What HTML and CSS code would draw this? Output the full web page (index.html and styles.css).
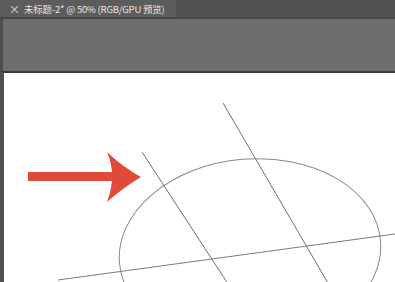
FILE: index.html
```html
<!DOCTYPE html>
<html>
<head>
<meta charset="utf-8">
<link rel="stylesheet" href="styles.css">
</head>
<body>
<div class="app">
  <div class="tabbar">
    <div class="tab"><span class="close">×</span><span class="title">未标题-2* @ 50% (RGB/GPU 预览)</span></div>
  </div>
  <div class="panel"></div>
  <div class="canvas">
    <svg class="art" viewBox="4 73 391 209" preserveAspectRatio="none">
      <ellipse cx="250" cy="252" rx="131" ry="93" transform="rotate(-5 250 252)" fill="none" stroke="#8a8a8a" stroke-width="1"/>
      <line x1="142" y1="152" x2="232" y2="290" stroke="#6e6e6e" stroke-width="1"/>
      <line x1="223" y1="103" x2="332" y2="290" stroke="#6e6e6e" stroke-width="1"/>
      <line x1="58" y1="280" x2="395" y2="234" stroke="#7a7a7a" stroke-width="1"/>
      <path d="M28 172 L112 172 Q111 161 107 152 Q124 168 141 177 Q124 187 107 202 Q111 192 112 181 L28 181 Z" fill="#e04a38"/>
    </svg>
  </div>
</div>
</body>
</html>
```
FILE: styles.css
```css
html, body {
  margin: 0;
  padding: 0;
  width: 395px;
  height: 282px;
  overflow: hidden;
  background: #535353;
}
.app {
  display: flex;
  flex-direction: column;
  width: 395px;
  height: 282px;
}
.tabbar {
  height: 17px;
  background: #515151;
  border-bottom: 2px solid #464646;
  display: flex;
}
.tab {
  width: 176px;
  background: #5c5c5c;
  display: flex;
  align-items: center;
  font-family: "Noto Sans CJK SC", "Liberation Sans", sans-serif;
  font-size: 9.5px;
  color: #e6e6e6;
  white-space: nowrap;
}
.close {
  margin-left: 9px;
  width: 15px;
  font-size: 11px;
}
.title {
  letter-spacing: -0.2px;
}
.panel {
  height: 52px;
  background: #6e6e6e;
  border-left: 3px solid #4e4e4e;
}
.canvas {
  flex: 1;
  background: #ffffff;
  border-top: 2px solid #3a3a3a;
  border-left: 4px solid #505050;
  position: relative;
}
.art {
  display: block;
  width: 391px;
  height: 209px;
}
```
